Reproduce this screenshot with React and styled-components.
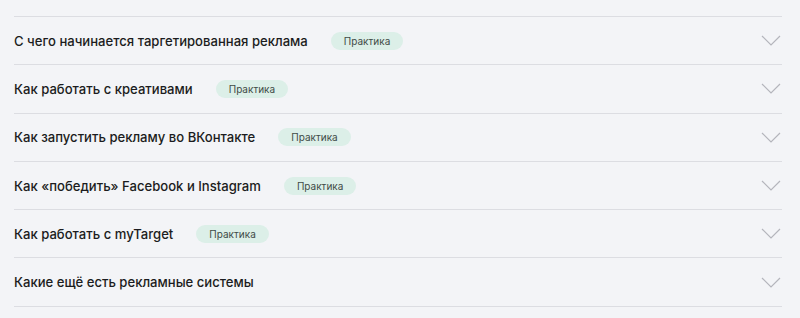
import React from "react";
import styled, { createGlobalStyle } from "styled-components";

const GlobalStyle = createGlobalStyle`
  html, body {
    margin: 0;
    padding: 0;
    background: #f3f4f7;
  }
  body {
    font-family: Inter, "Noto Sans", sans-serif;
  }
`;

const Wrapper = styled.div`
  padding: 16px 18px 0 14px;
`;

const List = styled.div`
  border-top: 1px solid #dcdde2;
`;

const Row = styled.div`
  display: flex;
  align-items: center;
  height: 47.3px;
  border-bottom: 1px solid #dcdde2;
  cursor: pointer;
`;

const Title = styled.span`
  font-size: 13.1px;
  font-weight: 500;
  color: #1b1c20;
`;

const Badge = styled.span`
  margin-left: 23px;
  display: inline-flex;
  align-items: center;
  justify-content: center;
  height: 18px;
  padding: 0 13px;
  border-radius: 9px;
  background: #dcefe8;
  color: #414b47;
  font-size: 10px;
  font-weight: 400;
`;

const Chevron = styled.svg`
  margin-left: auto;
  margin-right: 1px;
  flex-shrink: 0;
`;

const items = [
  { title: "С чего начинается таргетированная реклама", badge: true },
  { title: "Как работать с креативами", badge: true },
  { title: "Как запустить рекламу во ВКонтакте", badge: true },
  { title: "Как «победить» Facebook и Instagram", badge: true },
  { title: "Как работать с myTarget", badge: true },
  { title: "Какие ещё есть рекламные системы", badge: false },
];

const App = () => (
  <>
    <GlobalStyle />
    <Wrapper>
      <List>
        {items.map((item, index) => (
          <Row key={index}>
            <Title>{item.title}</Title>
            {item.badge && <Badge>Практика</Badge>}
            <Chevron width="20" height="11" viewBox="0 0 20 11" fill="none">
              <path d="M1 1l9 9 9-9" stroke="#b4b5bc" strokeWidth="1.2" />
            </Chevron>
          </Row>
        ))}
      </List>
    </Wrapper>
  </>
);

export default App;
